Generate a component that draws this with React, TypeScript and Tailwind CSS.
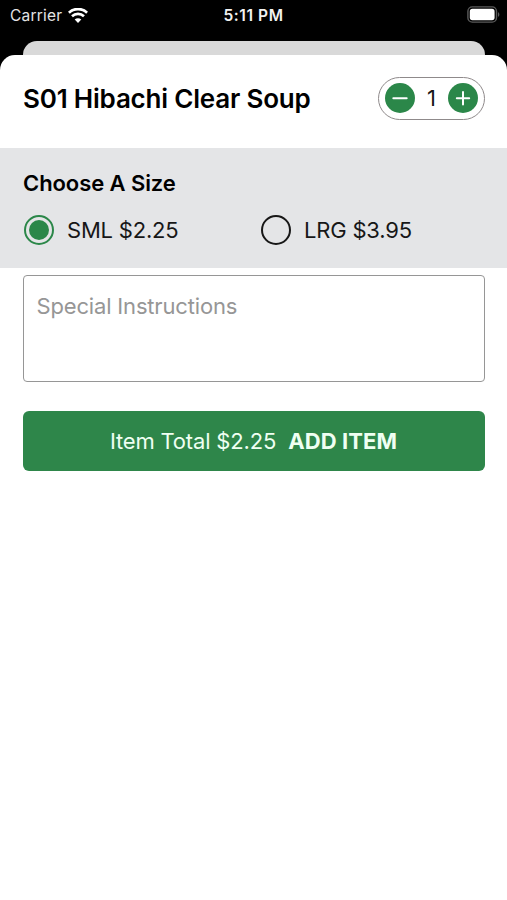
import React, { useState } from 'react';

const UNIT_SIZES = [
  { id: 'sml', label: 'SML', price: 2.25 },
  { id: 'lrg', label: 'LRG', price: 3.95 }
];

function StatusBar() {
  return (
    <div className="grid grid-cols-3 h-[41px] pt-[6px] pl-[10px] pr-[7px] text-white">
      <div className="flex items-center h-[18px] gap-[6px]">
        <span className="pt-px text-[15.5px] leading-[18px] tracking-[0.2px] text-[#e4e4e4]">Carrier</span>
        <svg width="20" height="15" viewBox="0 0 20 15" fill="none" aria-label="Wi-Fi">
          <path d="M0.9 4.7C6 -0.2 14 -0.2 19.1 4.7" stroke="white" strokeWidth="2.7" />
          <path d="M4 8.2C7.4 5.1 12.6 5.1 16 8.2" stroke="white" strokeWidth="2.7" />
          <path d="M10 15L6.7 11.5C8.5 9.8 11.5 9.8 13.3 11.5Z" fill="white" />
        </svg>
      </div>
      <div className="flex items-center justify-center h-[18px]">
        <span className="pt-px mr-[3px] text-[15.5px] leading-[18px] font-semibold tracking-[0.6px] whitespace-nowrap text-[#f2f2f2]">5:11 PM</span>
      </div>
      <div className="flex items-center justify-end h-[17px]">
        <svg width="33" height="17" viewBox="0 0 33 17" fill="none" aria-label="Battery">
          <rect x="0.9" y="0.9" width="28.6" height="15.2" rx="4.4" stroke="#5a5a5a" strokeWidth="1.4" />
          <rect x="2.8" y="2.8" width="24.8" height="11.4" rx="2.6" fill="white" />
          <path d="M31 6.2C32.8 6.9 32.8 10.1 31 10.8Z" fill="#5a5a5a" />
        </svg>
      </div>
    </div>);

}

function QuantityStepper({ value, onChange }: { value: number; onChange: (value: number) => void }) {
  return (
    <div className="flex items-center justify-between w-[107px] h-[43px] px-[6px] rounded-full border border-[#8f8a8b]">
      <button
        aria-label="Decrease quantity"
        className="flex items-center justify-center w-[30px] h-[30px] rounded-full bg-[#2b8749]"
        onClick={() => onChange(Math.max(1, value - 1))}>

        <svg width="16" height="16" viewBox="0 0 16 16" stroke="white" strokeWidth="2" strokeLinecap="round">
          <path d="M1.3 8.2H14.7" />
        </svg>
      </button>
      <span className="text-[22px] leading-none text-[#171717]">{value}</span>
      <button
        aria-label="Increase quantity"
        className="flex items-center justify-center w-[30px] h-[30px] rounded-full bg-[#2b8749]"
        onClick={() => onChange(value + 1)}>

        <svg width="16" height="16" viewBox="0 0 16 16" stroke="white" strokeWidth="2" strokeLinecap="round">
          <path d="M1.8 8.2H14.2M8 2V14.4" />
        </svg>
      </button>
    </div>);

}

export default function App() {
  const [quantity, setQuantity] = useState(1);
  const [sizeId, setSizeId] = useState('sml');
  const selected = UNIT_SIZES.find((size) => size.id === sizeId) || UNIT_SIZES[0];

  return (
    <div className="flex flex-col h-screen bg-black overflow-hidden font-['Inter',sans-serif]">
      <StatusBar />

      {/* Edge of the screen behind the sheet */}
      <div className="mx-[22.5px] h-[14px] shrink-0 rounded-t-[14px] bg-[#d9d9d9]" />

      <main className="flex-1 bg-white rounded-t-[15px]">
        <header className="flex items-center justify-between h-[93px] pl-[23px] pr-[22px] pb-[7px]">
          <h1 className="pt-px text-[26px] leading-8 font-semibold tracking-[-0.2px] whitespace-nowrap text-black">S01 Hibachi Clear Soup</h1>
          <QuantityStepper value={quantity} onChange={setQuantity} />
        </header>

        <section className="h-[120px] px-[23px] pt-[21px] bg-[#e4e5e7]">
          <h2 className="text-[22px] leading-7 font-semibold tracking-[-0.08px] text-black">Choose A Size</h2>
          <div className="grid grid-cols-[237px_1fr] mt-[18px]" role="radiogroup">
            {UNIT_SIZES.map((size) => {
              const isSelected = size.id === sizeId;
              return (
                <button
                  key={size.id}
                  role="radio"
                  aria-checked={isSelected}
                  className="flex items-center gap-[13px] h-[30px] pl-px text-left"
                  onClick={() => setSizeId(size.id)}>

                  <span className={`flex items-center justify-center w-[30px] h-[30px] rounded-full border-2 ${isSelected ? 'border-[#2b8749]' : 'border-[#171717]'}`}>
                    {isSelected && <span className="w-5 h-5 rounded-full bg-[#2b8749]" />}
                  </span>
                  <span className="text-[22px] leading-7 tracking-[-0.2px] whitespace-nowrap text-[#171717]">
                    {size.label} ${size.price.toFixed(2)}
                  </span>
                </button>);

            })}
          </div>
        </section>

        <div className="px-[22.5px] pt-[7px]">
          <textarea
            placeholder="Special Instructions"
            className="block w-full h-[107px] px-[13px] pt-[16px] resize-none rounded-[4px] border border-[#969696] text-[22px] leading-7 tracking-[-0.17px] placeholder:text-[#969696] outline-none" />

          <button className="flex items-center justify-center gap-[12px] w-full h-[59.5px] mt-[29px] rounded-[6px] bg-[#2e864a] text-[22px] leading-7 tracking-[-0.17px] whitespace-nowrap text-[#effff2]">
            <span>Item Total ${(selected.price * quantity).toFixed(2)}</span>
            <span className="font-bold tracking-[0.1px]">ADD ITEM</span>
          </button>
        </div>
      </main>
    </div>);

}
